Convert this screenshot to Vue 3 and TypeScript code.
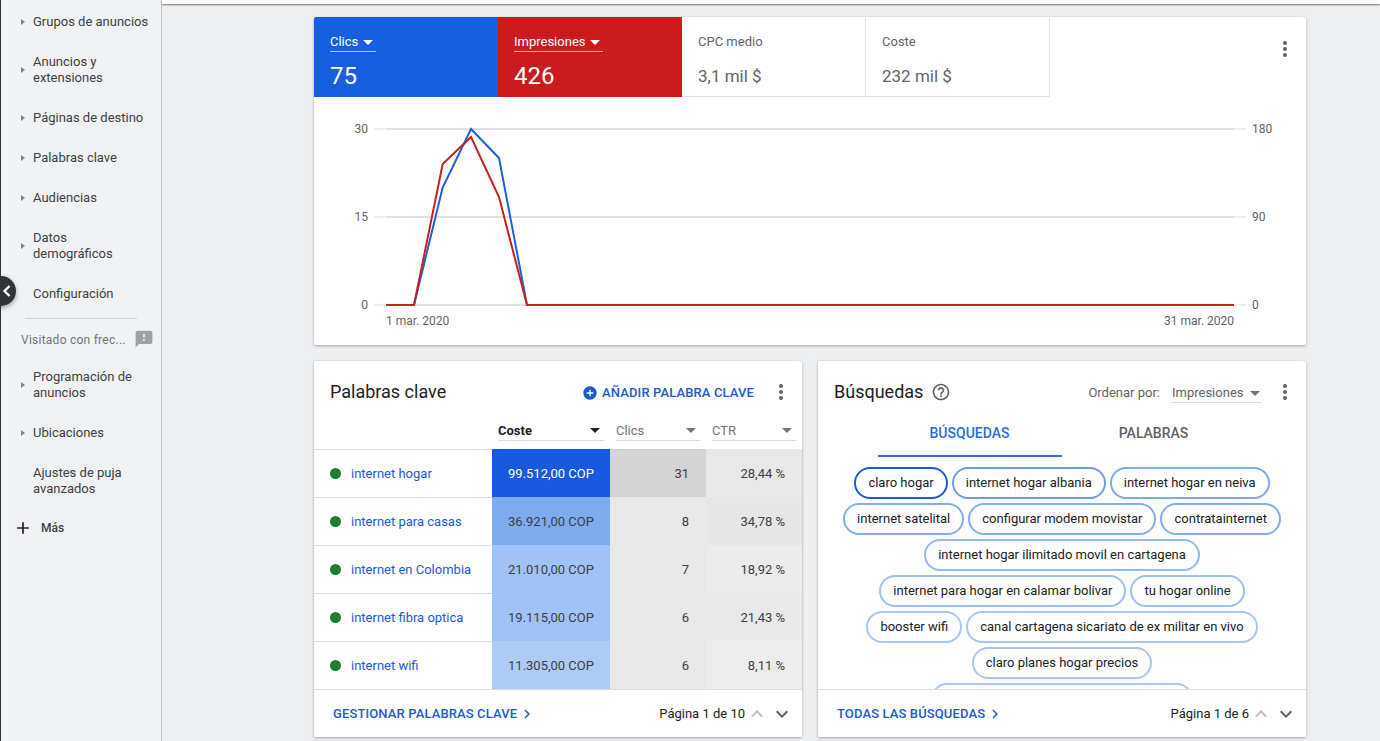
<script setup lang="ts">
interface NavItem { label: string; arrow: boolean; two?: boolean }
const navTop: NavItem[] = [
  { label: 'Grupos de anuncios', arrow: true },
  { label: 'Anuncios y extensiones', arrow: true, two: true },
  { label: 'Páginas de destino', arrow: true },
  { label: 'Palabras clave', arrow: true },
  { label: 'Audiencias', arrow: true },
  { label: 'Datos demográficos', arrow: true, two: true },
  { label: 'Configuración', arrow: false },
]
const navBottom: NavItem[] = [
  { label: 'Programación de anuncios', arrow: true, two: true },
  { label: 'Ubicaciones', arrow: true },
  { label: 'Ajustes de puja avanzados', arrow: false, two: true },
]
const tiles = [
  { name: 'Clics', value: '75', cls: 'blue' },
  { name: 'Impresiones', value: '426', cls: 'red' },
  { name: 'CPC medio', value: '3,1 mil $', cls: 'plain' },
  { name: 'Coste', value: '232 mil $', cls: 'plain' },
]
const rows = [
  { k: 'internet hogar', cost: '99.512,00 COP', costBg: '#185adf', costFg: '#ffffff', clicks: '31', clicksBg: '#d4d4d4', ctr: '28,44 %', ctrBg: '#e8e8e8' },
  { k: 'internet para casas', cost: '36.921,00 COP', costBg: '#7eaaf0', costFg: '#3c4043', clicks: '8', clicksBg: '#e8e8e8', ctr: '34,78 %', ctrBg: '#e6e6e6' },
  { k: 'internet en Colombia', cost: '21.010,00 COP', costBg: '#a1c2f6', costFg: '#3c4043', clicks: '7', clicksBg: '#e8e8e8', ctr: '18,92 %', ctrBg: '#ebebeb' },
  { k: 'internet fibra optica', cost: '19.115,00 COP', costBg: '#a1c2f6', costFg: '#3c4043', clicks: '6', clicksBg: '#e8e8e8', ctr: '21,43 %', ctrBg: '#e9e9e9' },
  { k: 'internet wifi', cost: '11.305,00 COP', costBg: '#aecbf6', costFg: '#3c4043', clicks: '6', clicksBg: '#e8e8e8', ctr: '8,11 %', ctrBg: '#ececec' },
]
const chips = [
  { t: 'claro hogar', c: '#1a5ce0' },
  { t: 'internet hogar albania', c: '#6f9ce9' },
  { t: 'internet hogar en neiva', c: '#7ea8ef' },
  { t: 'internet satelital', c: '#84adf1' },
  { t: 'configurar modem movistar', c: '#84adf1' },
  { t: 'contratainternet', c: '#84adf1' },
  { t: 'internet hogar ilimitado movil en cartagena', c: '#94b9f4' },
  { t: 'internet para hogar en calamar bolivar', c: '#9cbff5' },
  { t: 'tu hogar online', c: '#9cbff5' },
  { t: 'booster wifi', c: '#a8c7f8' },
  { t: 'canal cartagena sicariato de ex militar en vivo', c: '#a8c7f8' },
  { t: 'claro planes hogar precios', c: '#a8c7f8' },
]
const blueLine = '386,305 414,305 442.7,187.5 471,129 499,158 527,305 1234,305'
const redLine = '386,305 414,305 442.7,164 471,137 499,197 527,305 1234,305'
const grid = [
  { y: 129, l: '30', r: '180' },
  { y: 217, l: '15', r: '90' },
  { y: 305, l: '0', r: '0' },
]
</script>

<template>
  <div class="page">
    <aside class="side">
      <div v-for="n in navTop" :key="n.label" class="nav" :class="{ two: n.two }">
        <span v-if="n.arrow" class="arrow"></span>
        <span class="nav-label">{{ n.label }}</span>
      </div>
      <div class="divider"></div>
      <div class="visited">
        <span>Visitado con frec...</span>
        <svg class="fb" viewBox="0 0 24 24" width="20" height="20"><path d="M20 2H4c-1.1 0-1.99.9-1.99 2L2 22l4-4h14c1.1 0 2-.9 2-2V4c0-1.1-.9-2-2-2zm-7 12h-2v-2h2v2zm0-4h-2V6h2v4z" /></svg>
      </div>
      <div v-for="n in navBottom" :key="n.label" class="nav" :class="{ two: n.two }">
        <span v-if="n.arrow" class="arrow"></span>
        <span class="nav-label">{{ n.label }}</span>
      </div>
      <div class="more">
        <svg viewBox="0 0 24 24" width="20" height="20"><path d="M19 13h-6v6h-2v-6H5v-2h6V5h2v6h6v2z" /></svg>
        <span>Más</span>
      </div>
    </aside>
    <button class="toggle" type="button" aria-label="Contraer">
      <svg viewBox="0 0 12 12" width="12" height="12"><path d="M8.5 1 3.5 6l5 5" fill="none" stroke="#fff" stroke-width="2.4" /></svg>
    </button>

    <main class="main">
      <div class="topbar"></div>

      <section class="card overview">
        <div class="tiles">
          <div v-for="t in tiles" :key="t.name" class="tile" :class="t.cls">
            <div class="tile-head">
              <span>{{ t.name }}</span>
              <i v-if="t.cls !== 'plain'" class="caret"></i>
            </div>
            <div class="tile-value">{{ t.value }}</div>
          </div>
          <div class="tiles-rest">
            <svg class="dots" viewBox="0 0 4 18" width="4" height="18"><circle cx="2" cy="3" r="2" /><circle cx="2" cy="9" r="2" /><circle cx="2" cy="15" r="2" /></svg>
          </div>
        </div>
        <svg class="chart" viewBox="314 97 992 248" width="992" height="248">
          <g v-for="g in grid" :key="g.y">
            <line x1="374" x2="1246" :y1="g.y" :y2="g.y" stroke="#ededed" stroke-width="2" />
            <line x1="386" x2="1234" :y1="g.y" :y2="g.y" stroke="#e0e0e0" stroke-width="2" />
            <text x="368" :y="g.y + 4" text-anchor="end" class="axis">{{ g.l }}</text>
            <text x="1252" :y="g.y + 4" class="axis">{{ g.r }}</text>
          </g>
          <polyline :points="blueLine" fill="none" stroke="#1a5fe0" stroke-width="2" />
          <polyline :points="redLine" fill="none" stroke="#c5221f" stroke-width="2" />
          <text x="386" y="325" class="axis">1 mar. 2020</text>
          <text x="1234" y="325" text-anchor="end" class="axis">31 mar. 2020</text>
        </svg>
      </section>

      <div class="cols">
        <section class="card panel">
          <header class="panel-head">
            <h2>Palabras clave</h2>
            <a class="add">
              <svg viewBox="0 0 24 24" width="16" height="16"><path d="M12 2C6.48 2 2 6.48 2 12s4.48 10 10 10 10-4.48 10-10S17.52 2 12 2zm5 11h-4v4h-2v-4H7v-2h4V7h2v4h4v2z" /></svg>
              AÑADIR PALABRA CLAVE
            </a>
            <svg class="dots" viewBox="0 0 4 18" width="4" height="18"><circle cx="2" cy="3" r="2" /><circle cx="2" cy="9" r="2" /><circle cx="2" cy="15" r="2" /></svg>
          </header>
          <div class="thead">
            <span></span>
            <div class="th strong"><span>Coste</span><i class="caret dark"></i></div>
            <div class="th"><span>Clics</span><i class="caret grey"></i></div>
            <div class="th"><span>CTR</span><i class="caret grey"></i></div>
          </div>
          <div class="tbody">
            <div v-for="r in rows" :key="r.k" class="tr">
              <div class="td-name"><i class="dot"></i><a>{{ r.k }}</a></div>
              <div class="td cost" :style="{ background: r.costBg, color: r.costFg }">{{ r.cost }}</div>
              <div class="td num" :style="{ background: r.clicksBg }">{{ r.clicks }}</div>
              <div class="td num" :style="{ background: r.ctrBg }">{{ r.ctr }}</div>
            </div>
          </div>
          <footer class="panel-foot">
            <a class="foot-link">GESTIONAR PALABRAS CLAVE
              <svg viewBox="0 0 24 24" width="18" height="18"><path d="M10 6 8.59 7.41 13.17 12l-4.58 4.59L10 18l6-6z" /></svg>
            </a>
            <div class="pager">
              <span>Página 1 de 10</span>
              <svg class="pg off" viewBox="0 0 24 24" width="24" height="24"><path d="M7.41 15.41 12 10.83l4.59 4.58L18 14l-6-6-6 6z" /></svg>
              <svg class="pg" viewBox="0 0 24 24" width="24" height="24"><path d="M7.41 8.59 12 13.17l4.59-4.58L18 10l-6 6-6-6z" /></svg>
            </div>
          </footer>
        </section>

        <section class="card panel">
          <header class="panel-head">
            <h2>Búsquedas</h2>
            <svg class="help" viewBox="0 0 24 24" width="20" height="20"><path d="M11 18h2v-2h-2v2zm1-16C6.48 2 2 6.48 2 12s4.48 10 10 10 10-4.48 10-10S17.52 2 12 2zm0 18c-4.41 0-8-3.59-8-8s3.59-8 8-8 8 3.59 8 8-3.59 8-8 8zm0-14c-2.21 0-4 1.79-4 4h2c0-1.1.9-2 2-2s2 .9 2 2c0 2-3 1.75-3 5h2c0-2.25 3-2.5 3-5 0-2.21-1.79-4-4-4z" /></svg>
            <span class="sort-label">Ordenar por:</span>
            <div class="sort"><span>Impresiones</span><i class="caret grey"></i></div>
            <svg class="dots" viewBox="0 0 4 18" width="4" height="18"><circle cx="2" cy="3" r="2" /><circle cx="2" cy="9" r="2" /><circle cx="2" cy="15" r="2" /></svg>
          </header>
          <div class="tabs">
            <div class="tab active">BÚSQUEDAS</div>
            <div class="tab">PALABRAS</div>
          </div>
          <div class="chips">
            <span v-for="c in chips" :key="c.t" class="chip" :style="{ borderColor: c.c }">{{ c.t }}</span>
            <span class="chip chip-cut"></span>
          </div>
          <footer class="panel-foot">
            <a class="foot-link">TODAS LAS BÚSQUEDAS
              <svg viewBox="0 0 24 24" width="18" height="18"><path d="M10 6 8.59 7.41 13.17 12l-4.58 4.59L10 18l6-6z" /></svg>
            </a>
            <div class="pager">
              <span>Página 1 de 6</span>
              <svg class="pg off" viewBox="0 0 24 24" width="24" height="24"><path d="M7.41 15.41 12 10.83l4.59 4.58L18 14l-6-6-6 6z" /></svg>
              <svg class="pg" viewBox="0 0 24 24" width="24" height="24"><path d="M7.41 8.59 12 13.17l4.59-4.58L18 10l-6 6-6-6z" /></svg>
            </div>
          </footer>
        </section>
      </div>
    </main>
  </div>
</template>

<style scoped>
.page {
  position: relative;
  display: flex;
  width: 1380px;
  height: 741px;
  overflow: hidden;
  background: #eeeff1;
  font-family: Roboto, "Liberation Sans", sans-serif;
  font-size: 13px;
  line-height: 16px;
  color: #202124;
}
.side {
  flex: 0 0 162px;
  box-sizing: border-box;
  height: 741px;
  padding-top: 2px;
  background: #f1f2f3;
  border-left: 1px solid #2f3437;
  border-right: 1px solid #c6c8ca;
}
.nav {
  position: relative;
  box-sizing: border-box;
  height: 40px;
  padding: 12px 12px 12px 32px;
  color: #3c4043;
}
.nav.two {
  height: 56px;
}
.arrow {
  position: absolute;
  left: 20px;
  top: 50%;
  margin-top: -3px;
  border-left: 4px solid #80868b;
  border-top: 3px solid transparent;
  border-bottom: 3px solid transparent;
}
.divider {
  height: 1px;
  margin: 4px 24px 0;
  background: #d3d5d7;
}
.visited {
  box-sizing: border-box;
  height: 38px;
  padding: 13px 8px 0 20px;
  display: flex;
  justify-content: space-between;
  color: #70757a;
  font-size: 12px;
  letter-spacing: 0.25px;
}
.fb {
  fill: #9aa0a6;
  margin-top: -3px;
  margin-right: -1px;
}
.more {
  height: 40px;
  display: flex;
  align-items: center;
  gap: 8px;
  padding-left: 12px;
  font-size: 12px;
  font-weight: 500;
  color: #3c4043;
  margin-top: -1px;
}
.more svg {
  fill: #202124;
}
.toggle {
  position: absolute;
  left: -14px;
  top: 276px;
  width: 30px;
  height: 30px;
  padding: 0 0 0 11px;
  border: 0;
  border-radius: 50%;
  background: #2f3437;
  box-shadow: 0 2px 5px rgba(0, 0, 0, 0.35);
  display: flex;
  align-items: center;
  justify-content: center;
}
.main {
  flex: 1;
  min-width: 0;
  box-sizing: border-box;
  padding: 0 74px 0 152px;
}
.topbar {
  height: 4px;
  margin: 0 -74px 13px -152px;
  background: #fff;
  box-shadow: 0 1px 2px rgba(60, 64, 67, 0.7);
}
.card {
  background: #fff;
  border-radius: 2px;
  box-shadow: 0 1px 3px rgba(60, 64, 67, 0.42);
  overflow: hidden;
}
.overview {
  height: 328px;
}
.tiles {
  display: flex;
  height: 80px;
}
.tile {
  box-sizing: border-box;
  width: 184px;
  padding: 16px 16px 0;
}
.tile.blue {
  background: #185ee0;
  color: #fff;
}
.tile.red {
  background: #cc1b1d;
  color: #fff;
}
.tile.plain {
  color: #5f6368;
  border-right: 1px solid #e0e0e0;
  border-bottom: 1px solid #e0e0e0;
}
.tile-head {
  display: inline-flex;
  align-items: center;
  gap: 5px;
  height: 18px;
  padding-right: 3px;
  border-bottom: 1px solid rgba(255, 255, 255, 0.65);
}
.tile.plain .tile-head {
  border-bottom-color: transparent;
}
.tile-value {
  margin-top: 10px;
  font-size: 24px;
  line-height: 28px;
}
.tile.plain .tile-value {
  font-size: 17px;
}
.caret {
  display: inline-block;
  border-top: 5px solid #fff;
  border-left: 5px solid transparent;
  border-right: 5px solid transparent;
}
.caret.dark {
  border-top-color: #202124;
}
.caret.grey {
  border-top-color: #757575;
}
.tiles-rest {
  flex: 1;
  display: flex;
  justify-content: flex-end;
  padding: 23px 19px 0 0;
}
.dots {
  fill: #5f6368;
  flex: none;
}
.chart {
  display: block;
}
.axis {
  font-size: 12px;
  fill: #5f6368;
  font-family: Roboto, "Liberation Sans", sans-serif;
}
.cols {
  display: grid;
  grid-template-columns: 488px 488px;
  gap: 16px;
  margin-top: 16px;
}
.panel {
  height: 376px;
  display: flex;
  flex-direction: column;
}
.panel-head {
  flex: none;
  display: flex;
  align-items: center;
  height: 62px;
  padding: 0 19px 0 16px;
}
.panel-head h2 {
  margin: 0;
  font-size: 18px;
  font-weight: 400;
  line-height: 24px;
  color: #202124;
}
.add {
  margin-left: auto;
  display: flex;
  align-items: center;
  gap: 4px;
  font-size: 13px;
  font-weight: 500;
  letter-spacing: 0.12px;
  color: #1a5ad0;
  margin-right: 25px;
  position: relative;
  top: 1px;
}
.add svg {
  fill: #1a5ad0;
}
.help {
  fill: #5f6368;
  margin-left: 8px;
}
.sort-label {
  margin-left: auto;
  color: #5f6368;
  position: relative;
  top: 1px;
}
.sort {
  margin: 2px 21px 0 12px;
  width: 90px;
  height: 20px;
  box-sizing: border-box;
  display: flex;
  align-items: center;
  justify-content: space-between;
  padding: 1px 2px 0 0;
  border-bottom: 1px solid #dadce0;
  color: #5f6368;
}
.thead {
  flex: none;
  box-sizing: border-box;
  display: grid;
  grid-template-columns: 178px 118px 96px 96px;
  height: 27px;
  margin-bottom: -1px;
  border-bottom: 1px solid #dadce0;
}
.th {
  box-sizing: border-box;
  margin: 0 6px;
  height: 18px;
  display: flex;
  align-items: center;
  justify-content: space-between;
  padding: 0 4px 2px 0;
  border-bottom: 1px solid #dadce0;
  color: #70757a;
}
.th.strong {
  font-weight: 700;
  color: #202124;
}
.tbody {
  flex: none;
}
.tr {
  display: grid;
  grid-template-columns: 178px 118px 96px 96px;
  height: 48px;
  position: relative;
}
.td-name {
  display: flex;
  align-items: center;
  padding: 1px 0 0 16px;
  gap: 10px;
  border-top: 1px solid #dadce0;
  box-sizing: border-box;
}
.dot {
  width: 11px;
  height: 11px;
  border-radius: 50%;
  background: #1f7a32;
  position: relative;
  top: -1px;
}
.td-name a {
  color: #1a5ad0;
}
.td {
  display: flex;
  align-items: center;
  padding-top: 2px;
  box-sizing: border-box;
  color: #3c4043;
}
.cost {
  justify-content: center;
}
.num {
  justify-content: flex-end;
  padding-right: 17px;
}
.panel-foot {
  margin-top: auto;
  flex: none;
  height: 48px;
  box-sizing: border-box;
  display: flex;
  align-items: center;
  justify-content: space-between;
  padding: 0 8px 0 19px;
  background: #fff;
  border-top: 1px solid #dadce0;
  position: relative;
}
.foot-link {
  display: flex;
  align-items: center;
  font-weight: 500;
  color: #1a5ad0;
  letter-spacing: 0.12px;
}
.foot-link svg {
  fill: #1a5ad0;
  margin-left: 1px;
}
.pager {
  display: flex;
  align-items: center;
  gap: 1px;
  color: #202124;
}
.pager span {
  margin-right: -1px;
}
.pg {
  fill: #5f6368;
}
.pg.off {
  fill: #bdc1c6;
}
.tabs {
  flex: none;
  display: flex;
  justify-content: center;
  height: 37px;
  margin-top: -3px;
}
.tab {
  width: 184px;
  height: 37px;
  box-sizing: border-box;
  padding: 5px 1px 0 0;
  text-align: center;
  font-size: 14px;
  font-weight: 500;
  color: #5f6368;
}
.tab.active {
  color: #2b6be6;
  border-bottom: 2px solid #2b6be6;
}
.chips {
  flex: 1;
  min-height: 0;
  overflow: hidden;
  display: flex;
  flex-wrap: wrap;
  justify-content: center;
  align-content: flex-start;
  gap: 4px;
  padding: 10px 24px 0;
}
.chip {
  box-sizing: border-box;
  height: 32px;
  padding: 0 12px;
  display: flex;
  align-items: center;
  border: 2px solid #a8c7f8;
  border-radius: 16px;
  color: #202124;
  white-space: nowrap;
}
.chip-cut {
  width: 262px;
}
</style>
